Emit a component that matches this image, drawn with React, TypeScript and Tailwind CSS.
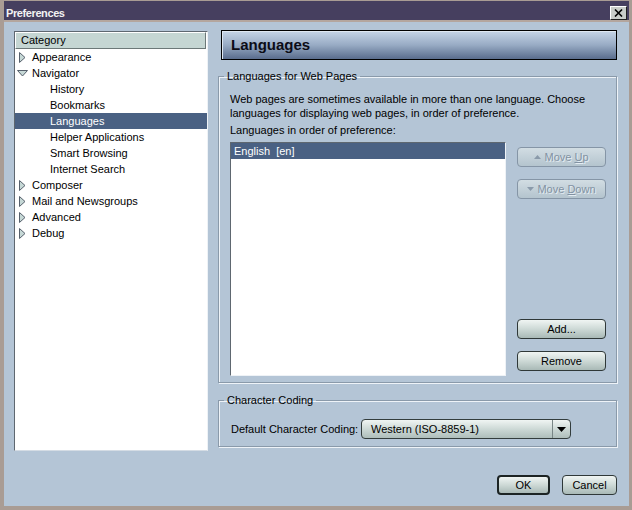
import React from "react";

function RightArrow() {
  return (
    <svg width="7" height="11" viewBox="0 0 7 11" className="block">
      <polygon points="0.5,0.5 6,5.5 0.5,10.5" fill="#c6d8d6" stroke="#56606c" strokeWidth="1" />
    </svg>
  );
}

function DownArrow() {
  return (
    <svg width="11" height="7" viewBox="0 0 11 7" className="block">
      <polygon points="0.5,0.5 10.5,0.5 5.5,6" fill="#c6d8d6" stroke="#56606c" strokeWidth="1" />
    </svg>
  );
}

function TopRow({ label, open }: { label: string; open?: boolean }) {
  return (
    <div className="h-[16px] flex items-center leading-[16px]">
      <span className="w-[17px] flex items-center">
        {open ? (
          <span className="ml-[2px]">
            <DownArrow />
          </span>
        ) : (
          <span className="ml-[4px]">
            <RightArrow />
          </span>
        )}
      </span>
      <span>{label}</span>
    </div>
  );
}

function ChildRow({ label, selected }: { label: string; selected?: boolean }) {
  return (
    <div
      className={
        selected
          ? "h-[16px] leading-[16px] pl-[35px] bg-[#4a6183] text-white"
          : "h-[16px] leading-[16px] pl-[35px] text-black"
      }
    >
      {label}
    </div>
  );
}

function Tree() {
  return (
    <div className="w-[194px] h-[420px] mt-[1px] bg-white border border-t-[#5e6770] border-l-[#5e6770] border-r-[#eef2f6] border-b-[#d4dce4] shrink-0">
      <div className="h-[17px] mr-[1px] bg-[#c5d6d3] border border-t-white border-l-white border-r-[#6c7878] border-b-[#6c7878] pl-[5px] leading-[15px]">
        Category
      </div>
      <TopRow label="Appearance" />
      <TopRow label="Navigator" open />
      <ChildRow label="History" />
      <ChildRow label="Bookmarks" />
      <ChildRow label="Languages" selected />
      <ChildRow label="Helper Applications" />
      <ChildRow label="Smart Browsing" />
      <ChildRow label="Internet Search" />
      <TopRow label="Composer" />
      <TopRow label="Mail and Newsgroups" />
      <TopRow label="Advanced" />
      <TopRow label="Debug" />
    </div>
  );
}

function UpTri() {
  return (
    <svg width="7" height="4" viewBox="0 0 7 4" className="block mr-[3px]">
      <polygon points="0,4 7,4 3.5,0" fill="#8a9aaa" />
    </svg>
  );
}

function DownTri() {
  return (
    <svg width="7" height="4" viewBox="0 0 7 4" className="block mr-[3px]">
      <polygon points="0,0 7,0 3.5,4" fill="#8a9aaa" />
    </svg>
  );
}

function DisabledBtn({ children }: { children: React.ReactNode }) {
  return (
    <div className="w-[89px] h-[20px] rounded-[4px] border border-[#8595a6] bg-linear-to-b from-[#d2dde3] to-[#b4c4ce] flex items-center justify-center text-[#8292a2] [text-shadow:1px_1px_0_#e4ecf2] leading-[14px]">
      {children}
    </div>
  );
}

function Btn({ children, className }: { children: React.ReactNode; className: string }) {
  return (
    <div
      className={
        "h-[20px] rounded-[4px] bg-linear-to-b from-[#f0f5f3] via-[#cdd9d6] to-[#a9b9b6] flex items-center justify-center text-black leading-[14px] " +
        className
      }
    >
      {children}
    </div>
  );
}

function Right() {
  return (
    <div className="ml-[10px] w-[399px] flex flex-col shrink-0">
      <div className="ml-[3px] h-[30px] border border-black bg-linear-to-b from-[#c6d5e7] via-[#98abc4] to-[#5a6d8d] shadow-[inset_1px_1px_0_#dfe8f2] flex items-center pl-[9px]">
        <span className="text-[15px] font-bold text-[#0c0c16] leading-[18px]">Languages</span>
      </div>

      <fieldset className="mt-[10px] border border-[#8a9aaa] shadow-[inset_1px_1px_0_#eef3f8,1px_1px_0_#eef3f8] pl-[11px] pr-[10px] pt-[9px] pb-[6px]">
        <legend className="ml-[-6px] px-[3px] text-[11px] leading-[13px]">Languages for Web Pages</legend>
        <p className="leading-[14px] w-[376px]">
          Web pages are sometimes available in more than one language. Choose languages for displaying web pages, in
          order of preference.
        </p>
        <div className="mt-[3px] leading-[14px]">Languages in order of preference:</div>
        <div className="mt-[5px] flex">
          <div className="w-[276px] h-[234px] bg-white border border-t-[#5e6770] border-l-[#5e6770] border-r-[#eef2f6] border-b-[#eef2f6] shrink-0">
            <div className="h-[16px] leading-[16px] bg-[#4a6183] text-white pl-[3px] whitespace-pre">English  [en]</div>
          </div>
          <div className="ml-[11px] w-[89px] h-[234px] pt-[5px] pb-[5px] flex flex-col justify-between">
            <div className="flex flex-col gap-[12px]">
              <DisabledBtn>
                <UpTri />
                <span>
                  Move <span className="underline">U</span>p
                </span>
              </DisabledBtn>
              <DisabledBtn>
                <DownTri />
                <span>
                  Move <span className="underline">D</span>own
                </span>
              </DisabledBtn>
            </div>
            <div className="flex flex-col gap-[12px]">
              <Btn className="w-[89px] border border-[#2f3838]">Add...</Btn>
              <Btn className="w-[89px] border border-[#2f3838]">Remove</Btn>
            </div>
          </div>
        </div>
      </fieldset>

      <fieldset className="mt-[11px] border border-[#8a9aaa] shadow-[inset_1px_1px_0_#eef3f8,1px_1px_0_#eef3f8] pl-[12px] pr-[10px] pt-[12px] pb-[7px]">
        <legend className="ml-[-7px] px-[3px] text-[11px] leading-[13px]">Character Coding</legend>
        <div className="flex items-center h-[20px]">
          <span className="w-[130px] leading-[14px]">Default Character Coding:</span>
          <div className="w-[210px] h-[20px] rounded-[4px] border border-[#333d3d] bg-linear-to-b from-[#f0f5f3] via-[#cdd9d6] to-[#aebebb] flex">
            <span className="flex-1 pl-[9px] leading-[18px]">Western (ISO-8859-1)</span>
            <span className="w-[18px] border-l border-[#788686] flex items-center justify-center">
              <svg width="9" height="5" viewBox="0 0 9 5" className="block">
                <polygon points="0,0 9,0 4.5,5" fill="#000000" />
              </svg>
            </span>
          </div>
        </div>
      </fieldset>

      <div className="mt-[28px] flex justify-end gap-[12px]">
        <Btn className="w-[53px] border-2 border-[#1c2424]">OK</Btn>
        <Btn className="w-[55px] border border-[#2f3838]">Cancel</Btn>
      </div>
    </div>
  );
}

export default function App() {
  return (
    <div className="w-[632px] h-[510px] bg-[#a99c94] pt-[1px] pl-[4px] pr-[3px] pb-[4px] flex flex-col font-['Liberation_Sans',Arial,sans-serif] text-[11px] text-black">
      <div className="h-[19px] bg-[#463f5f] flex items-start justify-between shrink-0">
        <span className="text-[11px] font-bold text-[#f2f2f2] pl-[2px] pt-[6px] leading-[12px] tracking-[-0.4px]">
          Preferences
        </span>
        <div className="mt-[5px] mr-[2px] w-[17px] h-[14px] bg-[#c9cdc9] border border-t-white border-l-white border-r-[#202020] border-b-[#202020] flex items-center justify-center">
          <svg width="9" height="8" viewBox="0 0 9 8" className="block">
            <path d="M1 0.5 L8 7.5 M8 0.5 L1 7.5" stroke="#000" strokeWidth="1.6" />
          </svg>
        </div>
      </div>
      <div className="h-[2px] bg-[#b4a69e] shrink-0" />
      <div className="flex-1 bg-[#b4c5d6] flex pl-[10px] pt-[8px]">
        <Tree />
        <Right />
      </div>
    </div>
  );
}
